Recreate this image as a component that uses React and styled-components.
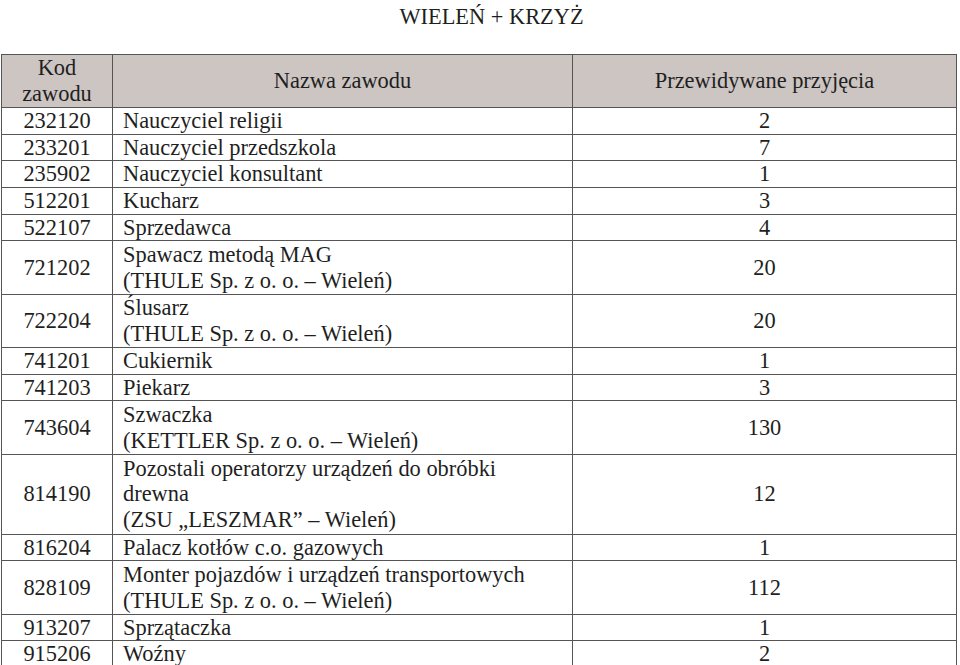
import React from 'react'
import styled, { createGlobalStyle } from 'styled-components'

const Global = createGlobalStyle`
    html, body {
        margin: 0;
        padding: 0;
        background: #ffffff;
    }
    body {
        font-family: "Liberation Serif", "Times New Roman", serif;
        color: #1f1f1f;
    }
`

const Page = styled.div`
    width: 960px;
    font-family: "Liberation Serif", "Times New Roman", serif;
`
const Title = styled.h1`
    box-sizing: border-box;
    height: 54px;
    margin: 0;
    padding: 4px 0 0 23px;
    font-size: 22.4px;
    font-weight: normal;
    line-height: 26px;
    text-align: center;
`
const Grid = styled.div`
    display: grid;
    grid-template-columns: 111px 460px 384px;
    width: 956px;
    margin-left: 1px;
    box-sizing: border-box;
    border-top: 1px solid #555555;
    border-left: 1px solid #555555;
    font-size: 22.4px;
    line-height: 25.67px;
    color: #1f1f1f;
`
const HeadCell = styled.div`
    display: flex;
    align-items: center;
    justify-content: center;
    min-height: 52px;
    background-color: #ccc5c2;
    border-right: 1px solid #555555;
    border-bottom: 1px solid #555555;
    text-align: center;
`
const Cell = styled.div`
    display: flex;
    align-items: center;
    justify-content: ${p => (p.$align === 'left' ? 'flex-start' : 'center')};
    padding: ${p => (p.$lines - 1) * 0.5}px ${p => (p.$align === 'left' ? '10px' : '0')};
    border-right: 1px solid #555555;
    border-bottom: 1px solid #555555;
    white-space: nowrap;
`
const Lines = styled.div`
    text-align: left;
`

const rows = [
    { code: '232120', name: ['Nauczyciel religii'], count: '2' },
    { code: '233201', name: ['Nauczyciel przedszkola'], count: '7' },
    { code: '235902', name: ['Nauczyciel konsultant'], count: '1' },
    { code: '512201', name: ['Kucharz'], count: '3' },
    { code: '522107', name: ['Sprzedawca'], count: '4' },
    { code: '721202', name: ['Spawacz metodą MAG', '(THULE Sp. z o. o. – Wieleń)'], count: '20' },
    { code: '722204', name: ['Ślusarz', '(THULE Sp. z o. o. – Wieleń)'], count: '20' },
    { code: '741201', name: ['Cukiernik'], count: '1' },
    { code: '741203', name: ['Piekarz'], count: '3' },
    { code: '743604', name: ['Szwaczka', '(KETTLER Sp. z o. o. – Wieleń)'], count: '130' },
    {
        code: '814190',
        name: ['Pozostali operatorzy urządzeń do obróbki', 'drewna', '(ZSU \u201ELESZMAR\u201D – Wieleń)'],
        count: '12'
    },
    { code: '816204', name: ['Palacz kotłów c.o. gazowych'], count: '1' },
    { code: '828109', name: ['Monter pojazdów i urządzeń transportowych', '(THULE Sp. z o. o. – Wieleń)'], count: '112' },
    { code: '913207', name: ['Sprzątaczka'], count: '1' },
    { code: '915206', name: ['Woźny'], count: '2' }
]

const App = () => {
    return (
        <Page>
            <Global />
            <Title>WIELEŃ + KRZYŻ</Title>
            <Grid>
                <HeadCell>Kod<br />zawodu</HeadCell>
                <HeadCell>Nazwa zawodu</HeadCell>
                <HeadCell>Przewidywane przyjęcia</HeadCell>
                {rows.map(row => {
                    const lines = row.name.length
                    return (
                        <React.Fragment key={row.code}>
                            <Cell $lines={lines}>{row.code}</Cell>
                            <Cell $lines={lines} $align='left'>
                                <Lines>
                                    {row.name.map((part, i) => (
                                        <div key={i}>{part}</div>
                                    ))}
                                </Lines>
                            </Cell>
                            <Cell $lines={lines}>{row.count}</Cell>
                        </React.Fragment>
                    )
                })}
            </Grid>
        </Page>
    )
}

export default App
